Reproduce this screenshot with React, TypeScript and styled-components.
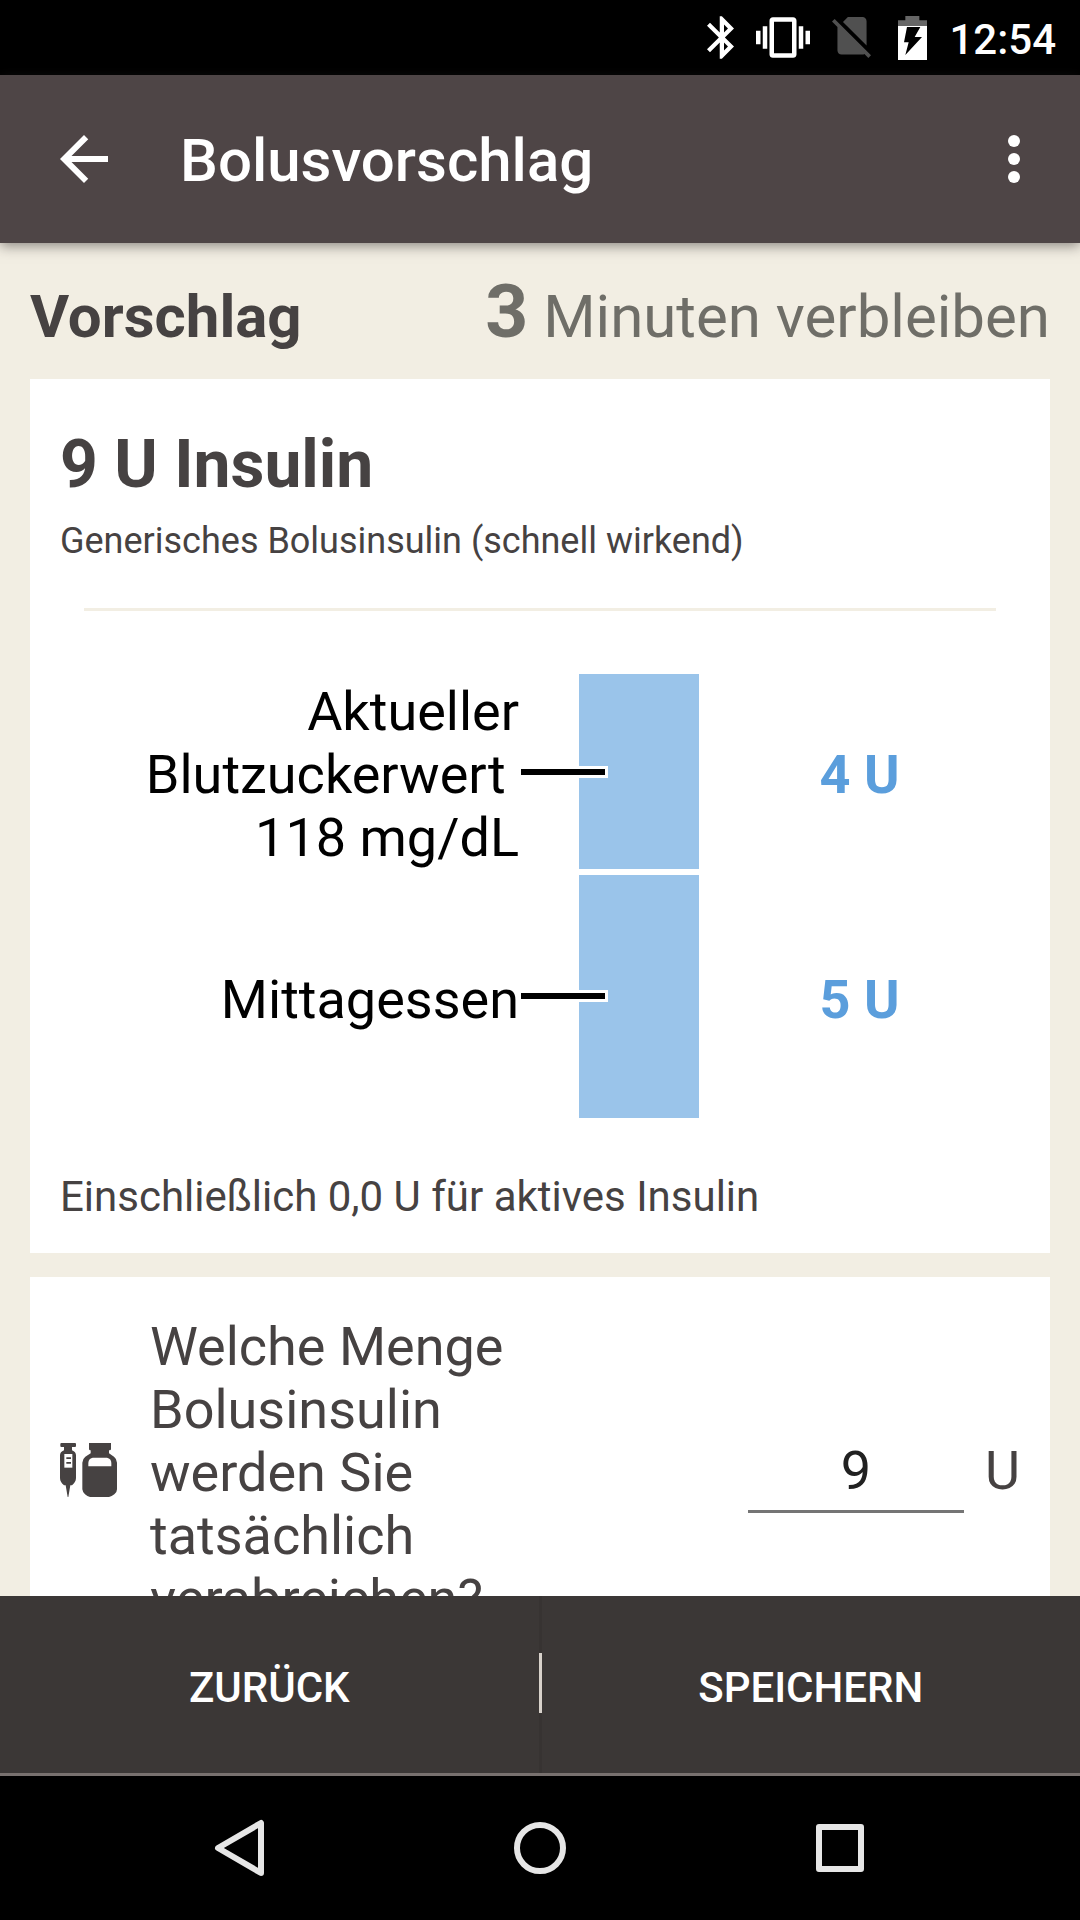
import React, { useState } from "react";
import styled, { createGlobalStyle } from "styled-components";

const color = {
  header: "#4e4546",
  page: "#f2eee3",
  text: "#464242",
  muted: "#6f6e68",
  bar: "#9ac4ea",
  value: "#5b9edc",
  footer: "#3b3736",
};

const GlobalStyle = createGlobalStyle`
  *, *::before, *::after { box-sizing: border-box; }
  body {
    margin: 0;
    background: #000;
    font-family: Roboto, "Noto Sans", sans-serif;
    color: ${color.text};
  }
  h1, h2, h3, p, ul { margin: 0; padding: 0; }
  button { border: 0; padding: 0; background: none; font: inherit; color: inherit; cursor: pointer; }
  svg { display: block; }
`;

const Screen = styled.div`
  display: flex;
  flex-direction: column;
  height: 100vh;
`;

const StatusBar = styled.div`
  flex: none;
  display: flex;
  align-items: center;
  justify-content: flex-end;
  gap: 22px;
  height: 75px;
  padding-right: 24px;
  background: #000;
  color: #fff;
`;

const Clock = styled.time`
  font-size: 42px;
  line-height: 50px;
  font-weight: 500;
  padding-top: 4px;
`;

const AppBar = styled.header`
  position: relative;
  z-index: 1;
  flex: none;
  display: flex;
  align-items: center;
  height: 168px;
  padding: 0 30px 0 48px;
  background: ${color.header};
  color: #fff;
  box-shadow: 0 3px 12px rgba(40, 34, 34, 0.5);
`;

const IconButton = styled.button`
  flex: none;
  width: 72px;
  height: 72px;
`;

const Title = styled.h1`
  flex: 1;
  padding: 4px 0 0 60px;
  font-size: 60px;
  line-height: 70px;
  font-weight: 500;
`;

const Content = styled.main`
  flex: 1;
  min-height: 0;
  overflow-y: auto;
  scrollbar-width: none;
  padding: 0 30px 24px;
  background: ${color.page};
`;

const SectionHead = styled.div`
  display: flex;
  align-items: baseline;
  justify-content: space-between;
  padding: 24px 0 18px;
  font-size: 60px;
  line-height: 88px;
`;

const SectionTitle = styled.h2`
  font-size: 60px;
  font-weight: 700;
`;

const Remaining = styled.p`
  color: ${color.muted};
  strong { font-size: 75px; font-weight: 700; }
`;

const Card = styled.section`
  padding: 47px 30px 31px;
  background: #fff;
  & + & { margin-top: 24px; }
`;

const Dose = styled.h3`
  font-size: 66px;
  line-height: 78px;
  font-weight: 700;
`;

const InsulinName = styled.p`
  margin-top: 16px;
  font-size: 36px;
  line-height: 42px;
`;

const Divider = styled.hr`
  height: 3px;
  margin: 46px 24px 63px;
  border: 0;
  background: ${color.page};
`;

const Chart = styled.ul<{ $rows: string }>`
  display: grid;
  grid-template-rows: ${(p) => p.$rows};
  gap: 6px;
  height: 444px;
  list-style: none;
  font-size: 54px;
  line-height: 63px;
`;

const ChartRow = styled.li`
  display: grid;
  grid-template-columns: minmax(0, 519fr) 120px minmax(0, 321fr);
`;

const ChartLabel = styled.span`
  align-self: center;
  padding: 6px 60px 0 0;
  text-align: right;
  white-space: pre-wrap;
  color: #000;
`;

const Bar = styled.span`
  position: relative;
  display: flex;
  align-items: center;
  background: ${color.bar};
`;

const Connector = styled.span`
  position: absolute;
  left: -58px;
  width: 87px;
  height: 12px;
  border: 3px solid #fff;
  border-left: 0;
  background: #000;
`;

const ChartValue = styled.strong`
  align-self: center;
  padding-top: 6px;
  text-align: center;
  font-weight: 700;
  color: ${color.value};
`;

const Note = styled.p`
  margin-top: 54px;
  font-size: 42px;
  line-height: 50px;
`;

const EntryCard = styled(Card)`
  display: flex;
  align-items: center;
  padding: 38px 30px;
  font-size: 54px;
  line-height: 63px;
`;

const Question = styled.label`
  flex: 0 1 400px;
  margin-left: 30px;
`;

const Amount = styled.div`
  display: flex;
  align-items: baseline;
  gap: 21px;
  margin-left: auto;
`;

const AmountInput = styled.input`
  width: 216px;
  height: 80px;
  padding: 6px 0 8px;
  border: 0;
  border-bottom: 3px solid #757575;
  border-radius: 0;
  outline: 0;
  background: none;
  font: inherit;
  text-align: center;
  color: #212121;
`;

const Footer = styled.footer`
  flex: none;
  display: flex;
  align-items: center;
  height: 180px;
  border-bottom: 3px solid #78716f;
  background: ${color.footer};
  color: #fff;
`;

const FooterButton = styled.button`
  flex: 1;
  height: 100%;
  padding-top: 5px;
  font-size: 42px;
  font-weight: 500;
  text-transform: uppercase;
`;

const Separator = styled.span`
  flex: none;
  align-self: stretch;
  display: flex;
  align-items: center;
  width: 3px;
  padding-bottom: 3px;
  background: #373332;
  &::before {
    content: "";
    width: 3px;
    height: 60px;
    background: #d8d2cb;
  }
`;

const NavBar = styled.nav`
  flex: none;
  display: flex;
  justify-content: center;
  align-items: center;
  gap: 228px;
  height: 144px;
  background: #000;
`;

const parts = [
  { label: "Aktueller\nBlutzuckerwert\u00a0\n118 mg/dL", units: 4 },
  { label: "Mittagessen", units: 5 },
];

function SyringeIcon() {
  return (
    <svg width="60" height="60" viewBox="60 68 180 180" fill={color.text} aria-hidden="true">
      <path d="M64 68h41a3 3 0 0 1 3 3v6a3 3 0 0 1-3 3H96v10c8 3 12 8 12 15v68c0 9-5 16-12 22h-5l-6 35h-2l-6-35h-5c-7-6-12-13-12-22v-68c0-7 4-12 12-15V80h-8a3 3 0 0 1-3-3v-6a3 3 0 0 1 3-3z" />
      <path fill="#fff" d="M73 101h24v41H73z" />
      <path d="M79 111h14v5H79zM79 125h14v5H79z" />
      <path d="M151 66h58q4 0 4 4v16q0 4-4 4h-2v9l15 10q9 7 9 18v80q0 9-8 15t-16 8h-57q-8-2-15-8t-8-15v-80q0-11 9-18l16-10v-9h-1q-4 0-4-4V70q0-4 4-4z" />
      <path fill="#fff" d="M158 112h43q13 3 13 16v10h-69v-10q0-13 13-16z" />
    </svg>
  );
}

export default function App() {
  const [amount, setAmount] = useState("9");
  return (
    <>
      <GlobalStyle />
      <Screen>
        <StatusBar>
          <svg width="27" height="43" viewBox="5 2 12.71 20" fill="#fff" aria-hidden="true">
            <path d="M17.71 7.71L12 2h-1v7.59L6.41 5 5 6.41 10.59 12 5 17.59 6.41 19 11 14.41V22h1l5.71-5.71-4.3-4.29 4.3-4.29zM13 5.83l1.88 1.88L13 9.59V5.83zm1.88 10.46L13 18.17v-3.76l1.88 1.88z" />
          </svg>
          <svg width="54" height="41" viewBox="0 3 24 18" fill="#fff" aria-hidden="true">
            <path d="M0 15h2V9H0v6zm3 2h2V7H3v10zm19-8v6h2V9h-2zm-3 8h2V7h-2v10zM16.5 3h-9C6.67 3 6 3.67 6 4.5v15c0 .83.67 1.5 1.5 1.5h9c.83 0 1.5-.67 1.5-1.5v-15c0-.83-.67-1.5-1.5-1.5zM16 19H8V5h8v14z" />
          </svg>
          <svg width="39" height="41" viewBox="2.38 3 18.74 19.6" fill="#505050" aria-hidden="true">
            <path d="M18.99 5c0-1.1-.89-2-1.99-2h-7L7.66 5.34 19 16.68 18.99 5zM3.65 3.88L2.38 5.15 5 7.77V19c0 1.1.9 2 2 2h10.01c.35 0 .67-.1.96-.26l1.88 1.88 1.27-1.27L3.65 3.88z" />
          </svg>
          <svg width="34" height="44" viewBox="-15 0 102 132" aria-hidden="true">
            <path fill="#666" d="M22 0h42v13h23v18H0V13h22z" />
            <path fill="#fff" d="M0 30h87v102H0z" />
            <path fill="#000" d="M27 33h40L50 63h22L22 117l10-38H18z" />
          </svg>
          <Clock>12:54</Clock>
        </StatusBar>

        <AppBar>
          <IconButton aria-label="Zurück">
            <svg width="72" height="72" viewBox="0 0 24 24" fill="#fff">
              <path d="M20 11H7.83l5.59-5.59L12 4l-8 8 8 8 1.41-1.41L7.83 13H20v-2z" />
            </svg>
          </IconButton>
          <Title>Bolusvorschlag</Title>
          <IconButton aria-label="Weitere Optionen">
            <svg width="72" height="72" viewBox="0 0 24 24" fill="#fff">
              <circle cx="12" cy="6" r="2" />
              <circle cx="12" cy="12" r="2" />
              <circle cx="12" cy="18" r="2" />
            </svg>
          </IconButton>
        </AppBar>

        <Content>
          <SectionHead>
            <SectionTitle>Vorschlag</SectionTitle>
            <Remaining>
              <strong>3</strong> Minuten verbleiben
            </Remaining>
          </SectionHead>

          <Card>
            <Dose>9 U Insulin</Dose>
            <InsulinName>Generisches Bolusinsulin (schnell wirkend)</InsulinName>
            <Divider />
            <Chart $rows={parts.map((p) => `minmax(0, ${p.units}fr)`).join(" ")}>
              {parts.map((p) => (
                <ChartRow key={p.label}>
                  <ChartLabel>{p.label}</ChartLabel>
                  <Bar>
                    <Connector />
                  </Bar>
                  <ChartValue>{p.units} U</ChartValue>
                </ChartRow>
              ))}
            </Chart>
            <Note>Einschließlich 0,0 U für aktives Insulin</Note>
          </Card>

          <EntryCard>
            <SyringeIcon />
            <Question htmlFor="amount">
              Welche Menge Bolusinsulin werden Sie tatsächlich verabreichen?
            </Question>
            <Amount>
              <AmountInput
                id="amount"
                inputMode="decimal"
                value={amount}
                onChange={(e) => setAmount(e.target.value)}
              />
              <span>U</span>
            </Amount>
          </EntryCard>
        </Content>

        <Footer>
          <FooterButton>Zurück</FooterButton>
          <Separator />
          <FooterButton>Speichern</FooterButton>
        </Footer>

        <NavBar>
          <IconButton aria-label="Zurück">
            <svg width="72" height="72" viewBox="0 0 72 72" fill="none" stroke="#e6e6e6" strokeWidth="6" strokeLinejoin="round">
              <path d="M57 11v50L14 36z" />
            </svg>
          </IconButton>
          <IconButton aria-label="Startbildschirm">
            <svg width="72" height="72" viewBox="0 0 72 72" fill="none" stroke="#e6e6e6" strokeWidth="6">
              <circle cx="36" cy="36" r="23" />
            </svg>
          </IconButton>
          <IconButton aria-label="Übersicht">
            <svg width="72" height="72" viewBox="0 0 72 72" fill="none" stroke="#e6e6e6" strokeWidth="6" strokeLinejoin="round">
              <rect x="15" y="15" width="42" height="42" />
            </svg>
          </IconButton>
        </NavBar>
      </Screen>
    </>
  );
}
